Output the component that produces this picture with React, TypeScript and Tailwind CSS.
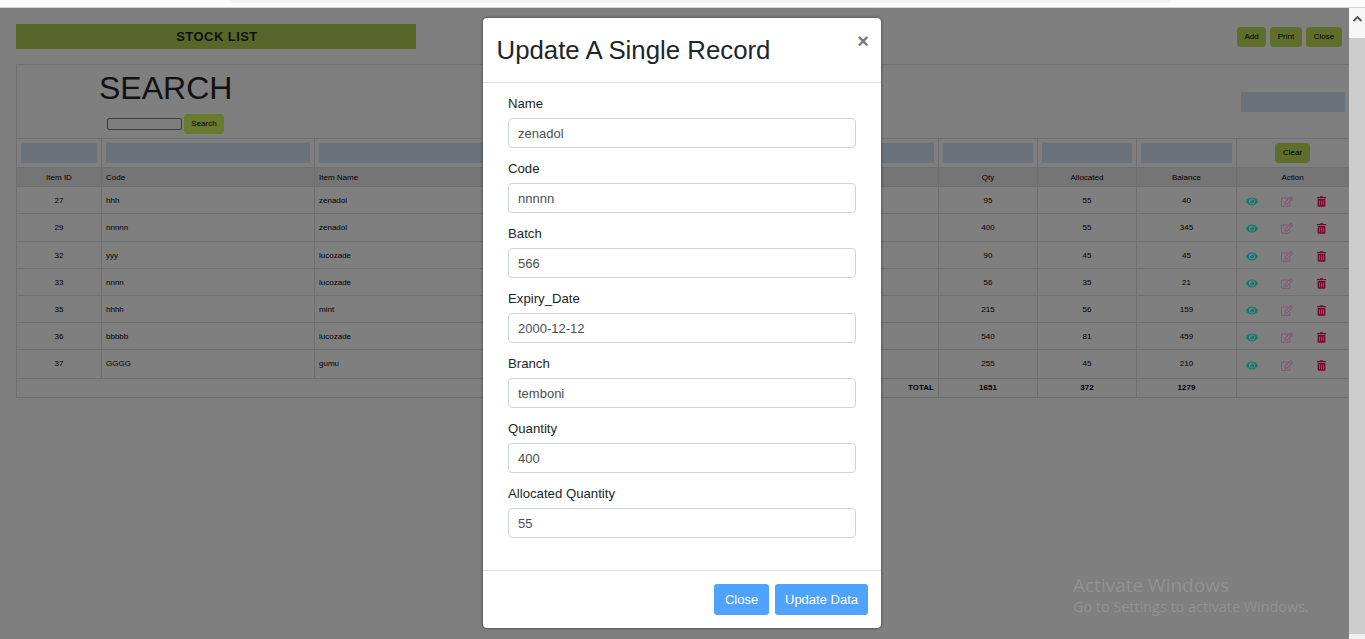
import { FaEye, FaRegEdit, FaTrashAlt } from "react-icons/fa";

const rows = [
  { id: 27, code: "hhh", name: "zenadol", qty: 95, alloc: 55, bal: 40, h: "h-[27px]", pad: "pt-[2px]" },
  { id: 29, code: "nnnnn", name: "zenadol", qty: 400, alloc: 55, bal: 345, h: "h-[28px]", pad: "pt-0" },
  { id: 32, code: "yyy", name: "lucozade", qty: 90, alloc: 45, bal: 45, h: "h-[27px]", pad: "pt-[2px]" },
  { id: 33, code: "nnnn", name: "lucozade", qty: 56, alloc: 35, bal: 21, h: "h-[27px]", pad: "pt-[2px]" },
  { id: 35, code: "hhhh", name: "mint", qty: 215, alloc: 56, bal: 159, h: "h-[27px]", pad: "pt-[2px]" },
  { id: 36, code: "bbbbb", name: "lucozade", qty: 540, alloc: 81, bal: 459, h: "h-[27px]", pad: "pt-[2px]" },
  { id: 37, code: "GGGG", name: "gumu", qty: 255, alloc: 45, bal: 210, h: "h-[29px]", pad: "pt-0" },
];

const fields = [
  { label: "Name", value: "zenadol" },
  { label: "Code", value: "nnnnn" },
  { label: "Batch", value: "566" },
  { label: "Expiry_Date", value: "2000-12-12" },
  { label: "Branch", value: "temboni" },
  { label: "Quantity", value: "400" },
  { label: "Allocated Quantity", value: "55" },
];

const colWidths = ["w-[85px]", "w-[213px]", "w-[206px]", "w-[130px]", "w-[130px]", "w-[158px]", "w-[99px]", "w-[99px]", "w-[100px]", "w-[114px]"];

const cell = "border border-[#6f6f6f] px-1 py-0";

function OliveButton({ label, className }: { label: string; className: string }) {
  return (
    <button className={`h-5 rounded text-[8px] text-black ${className}`}>{label}</button>
  );
}

export default function App() {
  return (
    <div className="relative flex h-[639px] flex-col overflow-hidden bg-[#7f7f7f] font-['Liberation_Sans',Arial,sans-serif]">
      {/* browser strip */}
      <div className="h-2 shrink-0 border-b border-[#d4d4d4] bg-[#fbfbfb]">
        <div className="ml-[231px] h-[3px] w-[940px] rounded-b-md bg-[#f1f1f4]" />
      </div>

      <div className="flex min-h-0 flex-1">
        <main className="min-w-0 flex-1 overflow-hidden pl-4 pt-4 text-black">
          <div className="flex h-[40px] items-start">
            <h1 className="flex h-[25px] w-[400px] items-center justify-center bg-[#586629] pl-[2px] text-[13px] font-bold tracking-[0.45px] text-[#111]">
              STOCK LIST
            </h1>
            <div className="ml-auto mr-[7px] mt-[3px] flex gap-1">
              <OliveButton label="Add" className="w-[29px] bg-[#5f6e2b]" />
              <OliveButton label="Print" className="w-[32px] bg-[#5f6e2b]" />
              <OliveButton label="Close" className="w-9 bg-[#5f6e2b]" />
            </div>
          </div>

          <table className="w-[1334px] table-fixed border-collapse text-[8px]">
            <colgroup>
              {colWidths.map((w, i) => (
                <col key={i} className={w} />
              ))}
            </colgroup>
            <tbody>
              <tr className="h-[74px]">
                <td colSpan={10} className="border border-[#6f6f6f] px-1 pb-0 pt-[4px] align-top">
                  <div className="flex items-start justify-between">
                    <div className="ml-[78px]">
                      <div className="text-[32px] leading-[38px] text-[#111]">SEARCH</div>
                      <div className="ml-[8px] mt-[7px] flex items-center gap-0.5">
                        <input readOnly className="h-3 w-[75px] rounded-[2px] border border-[#3c3c3c]" />
                        <button className="h-5 w-10 rounded bg-[#6a7a2e] text-[8px] text-black">Search</button>
                      </div>
                    </div>
                    <div className="mr-px mt-[23px] h-5 w-[104px] bg-[#6b7279]" />
                  </div>
                </td>
              </tr>
              <tr className="h-[29px]">
                {[0, 1, 2, 3, 4, 5, 6, 7, 8].map((i) => (
                  <td key={i} className={cell}>
                    <div className="h-5 bg-[#6b7279]" />
                  </td>
                ))}
                <td className={`${cell} pr-[6px] text-center`}>
                  <button className="h-5 w-[35px] rounded bg-[#5f6e2b] text-[8px] text-black">Clear</button>
                </td>
              </tr>
              <tr className="h-[19px] bg-[#757575]">
                <td className={`${cell} pt-[2px] text-center`}>Item ID</td>
                <td className={`${cell} pt-[2px]`}>Code</td>
                <td className={`${cell} pt-[2px]`}>Item Name</td>
                <td className={cell} />
                <td className={cell} />
                <td className={cell} />
                <td className={`${cell} pt-[2px] text-center`}>Qty</td>
                <td className={`${cell} pt-[2px] text-center`}>Allocated</td>
                <td className={`${cell} pt-[2px] text-center`}>Balance</td>
                <td className={`${cell} pr-[6px] pt-[2px] text-center`}>Action</td>
              </tr>
              {rows.map((r) => (
                <tr key={r.id} className={r.h}>
                  <td className={`${cell} ${r.pad} text-center`}>{r.id}</td>
                  <td className={`${cell} ${r.pad}`}>{r.code}</td>
                  <td className={`${cell} ${r.pad}`}>{r.name}</td>
                  <td className={cell} />
                  <td className={cell} />
                  <td className={cell} />
                  <td className={`${cell} ${r.pad} text-center`}>{r.qty}</td>
                  <td className={`${cell} ${r.pad} text-center`}>{r.alloc}</td>
                  <td className={`${cell} ${r.pad} text-center`}>{r.bal}</td>
                  <td className={cell}>
                    <div className="mt-[2px] flex items-center pl-[5px]">
                      <FaEye className="h-[11px] w-3 text-[#0f7a74]" />
                      <FaRegEdit className="ml-[23px] h-[11px] w-3 text-[#855479]" />
                      <FaTrashAlt className="ml-6 h-[11px] w-[9px] text-[#750a2c]" />
                    </div>
                  </td>
                </tr>
              ))}
              <tr className="h-[19px] font-bold">
                <td colSpan={6} className={`${cell} text-right`}>TOTAL</td>
                <td className={`${cell} text-center`}>1651</td>
                <td className={`${cell} text-center`}>372</td>
                <td className={`${cell} text-center`}>1279</td>
                <td className={cell} />
              </tr>
            </tbody>
          </table>
        </main>

        {/* scrollbar */}
        <div className="flex w-4 shrink-0 flex-col bg-[#cdcdcd]">
          <div className="flex h-[30px] items-start justify-center bg-[#f6f6f6] pt-2">
            <svg width="9" height="6" viewBox="0 0 9 6">
              <path d="M0.5 5 4.5 1l4 4" fill="none" stroke="#505050" strokeWidth="1.8" />
            </svg>
          </div>
          <div className="flex-1" />
          <div className="h-[5px] bg-[#f1f1f1]" />
        </div>
      </div>

      {/* watermark */}
      <div className="pointer-events-none absolute left-[1073px] top-[573px] font-['Open_Sans',sans-serif] text-[#929292]">
        <div className="text-[19px] leading-6">Activate Windows</div>
        <div className="text-[14.4px] leading-5">Go to Settings to activate Windows.</div>
      </div>

      {/* update modal */}
      <div className="absolute left-[483px] top-[18px] w-[398px] rounded bg-white shadow-[0_0_3px_rgba(0,0,0,0.6)]">
        <div className="flex h-[65px] items-start border-b border-[#dee2e6] pl-[13.5px] pr-3">
          <h2 className="mt-[17px] text-[25.8px] leading-[30px] text-[#212529]">Update A Single Record</h2>
          <span className="ml-auto mt-[13px] text-[20px] font-bold leading-5 text-[#7a7a7a]">×</span>
        </div>
        <form className="h-[487px] px-[25px]">
          {fields.map((f) => (
            <div key={f.label} className="pt-[11px]">
              <label className="mb-[4px] block h-5 text-[13.2px] leading-5 text-[#212529]">{f.label}</label>
              <input
                readOnly
                value={f.value}
                className="block h-[30px] w-full rounded border border-[#ced4da] px-[9px] text-[13px] text-[#495057]"
              />
            </div>
          ))}
        </form>
        <div className="flex h-[58px] items-start justify-end gap-[6px] border-t border-[#dee2e6] pr-[13px] pt-[13px]">
          <button className="h-[31px] w-[55px] rounded-[3px] bg-[#4fa3ff] text-[13px] text-white">Close</button>
          <button className="h-[31px] w-[93px] rounded-[3px] bg-[#4fa3ff] text-[13px] text-white">Update Data</button>
        </div>
      </div>
    </div>
  );
}
